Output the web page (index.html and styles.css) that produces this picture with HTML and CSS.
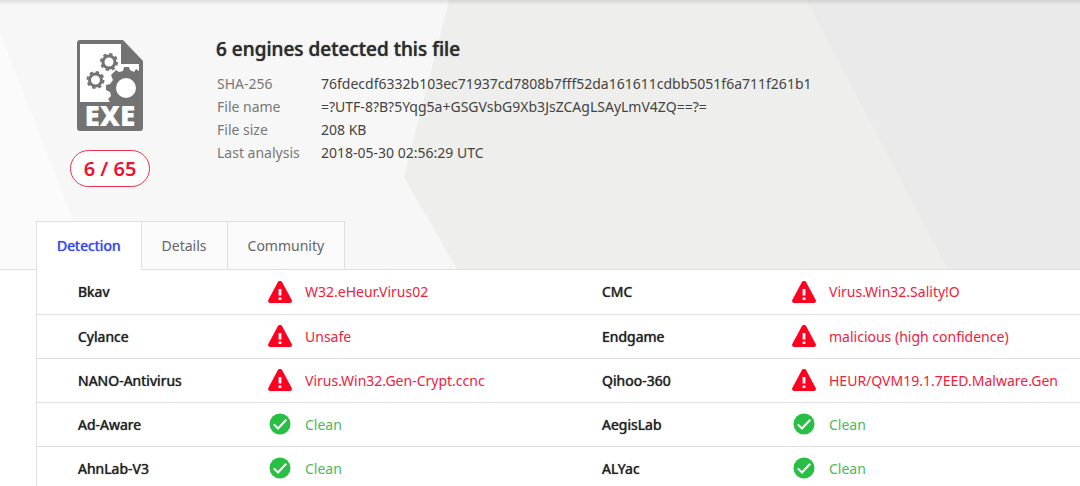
FILE: index.html
```html
<!DOCTYPE html>
<html lang="en">
<head>
<meta charset="utf-8">
<meta name="viewport" content="width=device-width, initial-scale=1">
<title>6 engines detected this file</title>
<link rel="stylesheet" href="styles.css">
</head>
<body>
<svg class="defs" aria-hidden="true">
  <symbol id="warn" viewBox="0 0 24 22">
    <path fill="#ff0020" d="M12 0c1 0 1.700.5 2.200 1.300l9.400 17.500c.8 1.500.1 3.200-1.600 3.200H2c-1.700 0-2.400-1.700-1.600-3.200L9.800 1.300C10.300.5 11 0 12 0z"/>
    <path fill="#fff" d="M10.600 8h2.800v6.500h-2.800zM10.600 16.400h2.800v2.700h-2.800z"/>
  </symbol>
  <symbol id="ok" viewBox="0 0 22 22">
    <circle cx="11" cy="11" r="10.500" fill="#28bf45"/>
    <path fill="none" stroke="#fff" stroke-width="2" d="M4.800 11.400l4.200 4.100 8.200-8.800"/>
  </symbol>
</svg>

<header class="summary">
  <svg class="backdrop" viewBox="0 0 1080 270" preserveAspectRatio="none" aria-hidden="true">
    <path fill="#fbfbfb" d="M0 33L92 270H0z"/>
    <path fill="#eeeeec" d="M449 0H806L947 270H457L404 178z"/>
    <path fill="#eaeaea" d="M806 0H1080V270H947z"/>
  </svg>
  <div class="overview">
    <div class="rating">
      <svg class="file-icon" viewBox="0 0 68 92" role="img" aria-label="EXE file">
        <path fill="#737373" d="M4 0H47L67 21V88q0 3-3 3H4q-3 0-3-3V3q0-3 3-3z"/>
        <path fill="#fff" d="M4 4H45V24H63V31L60 29 58 32 54 30 53 27 48 27 47 31 43 32 40 30 35 35 37 40 34 44 30 45 30 50 34 52 35 56 32 59 34 62H4z"/>
        <g fill="none" stroke="#737373">
          <circle cx="33" cy="22" r="6" stroke-width="3"/>
          <circle cx="33" cy="22" r="8" stroke-width="2" stroke-dasharray="3.400 2.883"/>
          <circle cx="19.500" cy="40" r="6" stroke-width="3"/>
          <circle cx="19.500" cy="40" r="8" stroke-width="2" stroke-dasharray="3.400 2.883"/>
        </g>
        <circle cx="50" cy="48" r="10" fill="#fff"/>
        <text class="file-type" x="34" y="86" text-anchor="middle">EXE</text>
      </svg>
      <span class="score">6 / 65</span>
    </div>
    <div class="details">
      <h1>6 engines detected this file</h1>
      <dl>
        <dt>SHA-256</dt><dd>76fdecdf6332b103ec71937cd7808b7fff52da161611cdbb5051f6a711f261b1</dd>
        <dt>File name</dt><dd>=?UTF-8?B?5Yqg5a+GSGVsbG9Xb3JsZCAgLSAyLmV4ZQ==?=</dd>
        <dt>File size</dt><dd>208 KB</dd>
        <dt>Last analysis</dt><dd>2018-05-30 02:56:29 UTC</dd>
      </dl>
    </div>
  </div>
  <nav class="tabs" role="tablist">
    <button class="tab active" role="tab" aria-selected="true">Detection</button>
    <button class="tab" role="tab" aria-selected="false">Details</button>
    <button class="tab" role="tab" aria-selected="false">Community</button>
  </nav>
</header>

<main class="results">
  <table>
    <colgroup><col class="engine-col"><col class="verdict-col"><col class="engine-col"><col></colgroup>
    <tbody>
      <tr>
        <th>Bkav</th><td><span class="verdict bad"><svg><use href="#warn"/></svg>W32.eHeur.Virus02</span></td>
        <th>CMC</th><td><span class="verdict bad"><svg><use href="#warn"/></svg>Virus.Win32.Sality!O</span></td>
      </tr>
      <tr>
        <th>Cylance</th><td><span class="verdict bad"><svg><use href="#warn"/></svg>Unsafe</span></td>
        <th>Endgame</th><td><span class="verdict bad"><svg><use href="#warn"/></svg>malicious (high confidence)</span></td>
      </tr>
      <tr>
        <th>NANO-Antivirus</th><td><span class="verdict bad"><svg><use href="#warn"/></svg>Virus.Win32.Gen-Crypt.ccnc</span></td>
        <th>Qihoo-360</th><td><span class="verdict bad"><svg><use href="#warn"/></svg>HEUR/QVM19.1.7EED.Malware.Gen</span></td>
      </tr>
      <tr>
        <th>Ad-Aware</th><td><span class="verdict good"><svg><use href="#ok"/></svg>Clean</span></td>
        <th>AegisLab</th><td><span class="verdict good"><svg><use href="#ok"/></svg>Clean</span></td>
      </tr>
      <tr>
        <th>AhnLab-V3</th><td><span class="verdict good"><svg><use href="#ok"/></svg>Clean</span></td>
        <th>ALYac</th><td><span class="verdict good"><svg><use href="#ok"/></svg>Clean</span></td>
      </tr>
    </tbody>
  </table>
</main>
</body>
</html>
```
FILE: styles.css
```css
* { box-sizing: border-box; }
body {
  margin: 0;
  background: #fff;
  color: #333;
  font: 14px/23px "Noto Sans", "Open Sans", sans-serif;
  overflow: hidden;
}
.defs { position: absolute; width: 0; height: 0; }
.summary {
  position: relative;
  background: #f7f7f7;
  border-bottom: 1px solid #e0e0e0;
}
.summary::before {
  content: "";
  position: absolute;
  inset: 0 0 auto;
  z-index: 1;
  height: 5px;
  background: linear-gradient(rgba(0, 0, 0, .1), rgba(0, 0, 0, 0));
}
.backdrop { position: absolute; inset: 0; width: 100%; height: 100%; }
.overview {
  position: relative;
  display: flex;
  gap: 66px;
  padding: 40px 40px 34px 70px;
}
.rating {
  display: flex;
  flex-direction: column;
  align-items: center;
  gap: 18px;
  width: 80px;
}
.file-icon { width: 68px; height: 92px; overflow: visible; }
.file-type { fill: #fff; font: 800 28px "Open Sans", sans-serif; }
.score {
  width: 80px;
  border: 1px solid #e8344f;
  border-radius: 19px;
  background: #fff;
  color: #f0102f;
  font-size: 20px;
  font-weight: 600;
  line-height: 35px;
  text-align: center;
}
h1 {
  margin: -3px 0 11px;
  color: #2e2e2e;
  font-size: 19px;
  font-weight: 500;
  line-height: 24px;
  text-shadow: 0 0 1px currentColor;
}
dl {
  display: grid;
  grid-template-columns: 104px auto;
  margin: 0;
  padding-left: 1px;
}
dt { color: #777; }
dd { margin: 0; color: #444; }
.tabs {
  position: relative;
  display: flex;
  margin: 0 36px -1px;
}
.tab {
  padding: 0 20px;
  border: 1px solid #e0e0e0;
  border-left-width: 0;
  background: #fafafa;
  color: #666;
  font: inherit;
  line-height: 47px;
}
.tab.active {
  border-left-width: 1px;
  border-bottom-color: #fff;
  background: #fff;
  color: #3445f0;
  text-shadow: 0 0 1px currentColor;
}
.results { margin-left: 36px; border-left: 1px solid #e0e0e0; }
table { width: 100%; table-layout: fixed; border-collapse: collapse; }
.engine-col { width: 231px; }
.verdict-col { width: 293px; }
th, td { height: 44px; padding: 0; border-bottom: 1px solid #e0e0e0; text-align: left; white-space: nowrap; }
th { padding-left: 41px; font-weight: 400; color: #222; text-shadow: 0 0 1px currentColor; }
.verdict { display: flex; align-items: center; gap: 13px; }
.verdict svg { width: 24px; height: 22px; }
.bad { color: #f0203c; }
.good { color: #4bb75c; }
```
